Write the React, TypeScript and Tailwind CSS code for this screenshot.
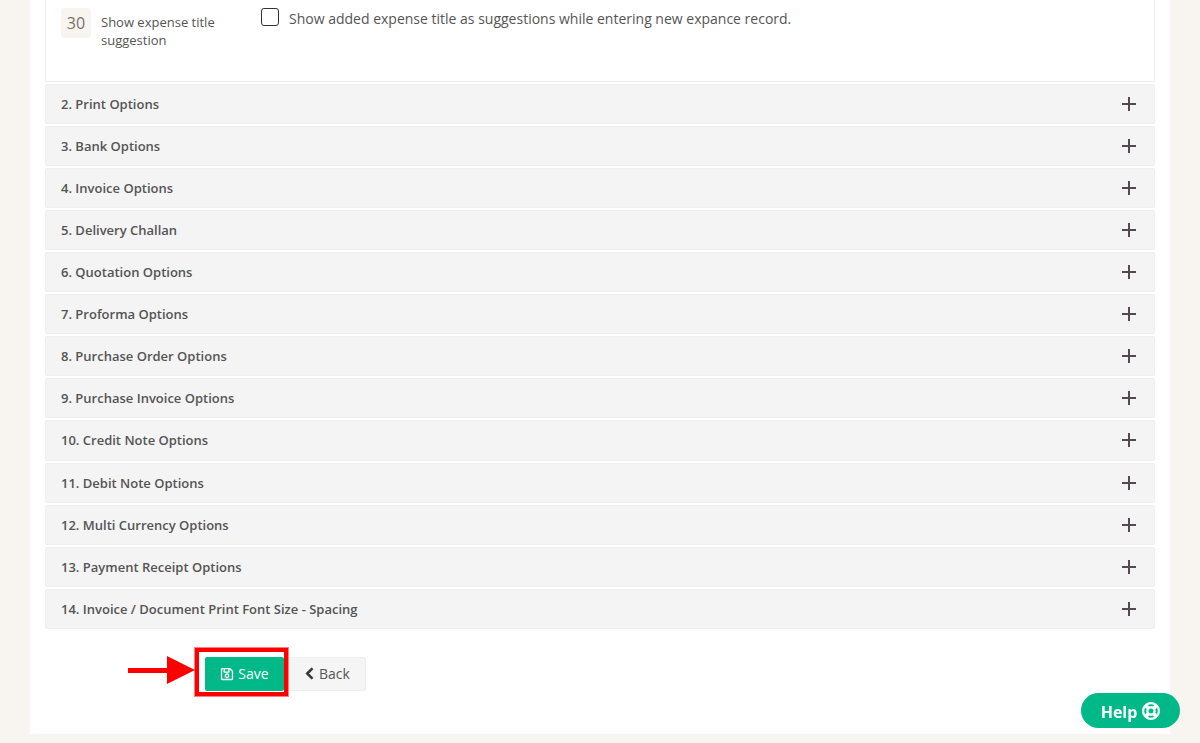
import React from "react";
import { FaChevronLeft, FaRegLifeRing, FaRegSave } from "react-icons/fa";

const sections = [
    "2. Print Options",
    "3. Bank Options",
    "4. Invoice Options",
    "5. Delivery Challan",
    "6. Quotation Options",
    "7. Proforma Options",
    "8. Purchase Order Options",
    "9. Purchase Invoice Options",
    "10. Credit Note Options",
    "11. Debit Note Options",
    "12. Multi Currency Options",
    "13. Payment Receipt Options",
    "14. Invoice / Document Print Font Size - Spacing",
];

function PlusIcon() {
    return (
        <svg viewBox="0 0 16 16" className="w-4 h-4 text-[#54494f]" aria-hidden="true">
            <path d="M8 1v14M1 8h14" stroke="currentColor" strokeWidth="2" fill="none" />
        </svg>
    );
}

function SectionRow({ title }: { title: string }) {
    return (
        <div className="h-[40.08px] mb-[2px] flex items-center justify-between bg-[#f4f4f4] border border-[#efefef] rounded-[2px] pl-[15px] pr-[17px]">
            <span className="pt-[1.5px] text-[13px] font-semibold text-[#555555]">{title}</span>
            <PlusIcon />
        </div>
    );
}

export default function App() {
    return (
        <div className="h-[743px] overflow-hidden bg-[#f8f5f0] px-[30px] font-['Open_Sans',sans-serif]">
            <div className="relative h-[734px] bg-white px-[15px]">
                <div className="h-[81.8px] mb-[2px] bg-white border border-t-0 border-[#eeeeee] rounded-b-[2px] pl-[15px] pt-[8px] flex items-start">
                    <div className="w-[30px] h-[30px] flex items-center justify-center rounded bg-[#f8f5f0] text-[16px] text-[#77706a]">
                        30
                    </div>
                    <div className="w-[160px] ml-[10px] mt-[5px] text-[13px] leading-[18px] text-[#555555]">
                        Show expense title suggestion
                    </div>
                    <div className="w-[18px] h-[18px] border border-[#333333] rounded-[3px] bg-white"></div>
                    <div className="ml-[10px] text-[14px] leading-[22px] text-[#555555]">
                        Show added expense title as suggestions while entering new expance record.
                    </div>
                </div>

                {sections.map((title) => (
                    <SectionRow key={title} title={title} />
                ))}

                <div className="mt-[28px] ml-[160px] flex">
                    <button className="w-[79px] h-[34px] flex items-center justify-center gap-[4px] bg-[#00b888] rounded-[2px] text-[14px] text-white">
                        <FaRegSave className="w-[14px] h-[14px]" />
                        Save
                    </button>
                    <button className="w-[82px] h-[34px] flex items-center pl-[20px] gap-[5px] bg-[#f5f5f5] border border-[#eeeeee] rounded-[2px] text-[14px] text-[#555555]">
                        <FaChevronLeft className="w-[9px] h-[13px] text-[#333333]" stroke="currentColor" strokeWidth={30} />
                        Back
                    </button>
                </div>

                {/* red highlight drawn over the save button */}
                <div className="absolute left-[165px] top-[648px] w-[93px] h-[48px] border-4 border-[#ff0000] shadow-[0_0_0_1px_#ff8080] pointer-events-none"></div>
                <svg viewBox="0 0 68 30" className="absolute left-[98px] top-[656px] w-[68px] h-[30px]" aria-hidden="true">
                    <path d="M0 12h39V0l28 14-28 14V17H0z" fill="#ff0000" />
                </svg>
            </div>

            <button className="fixed right-[20px] bottom-[15px] w-[99px] h-[35px] flex items-center justify-center gap-[5px] rounded-full bg-[#00b888] text-[16px] font-bold text-white">
                <span className="pt-[2px]">Help</span>
                <FaRegLifeRing className="w-[18px] h-[18px]" stroke="currentColor" strokeWidth={16} />
            </button>
        </div>
    );
}
